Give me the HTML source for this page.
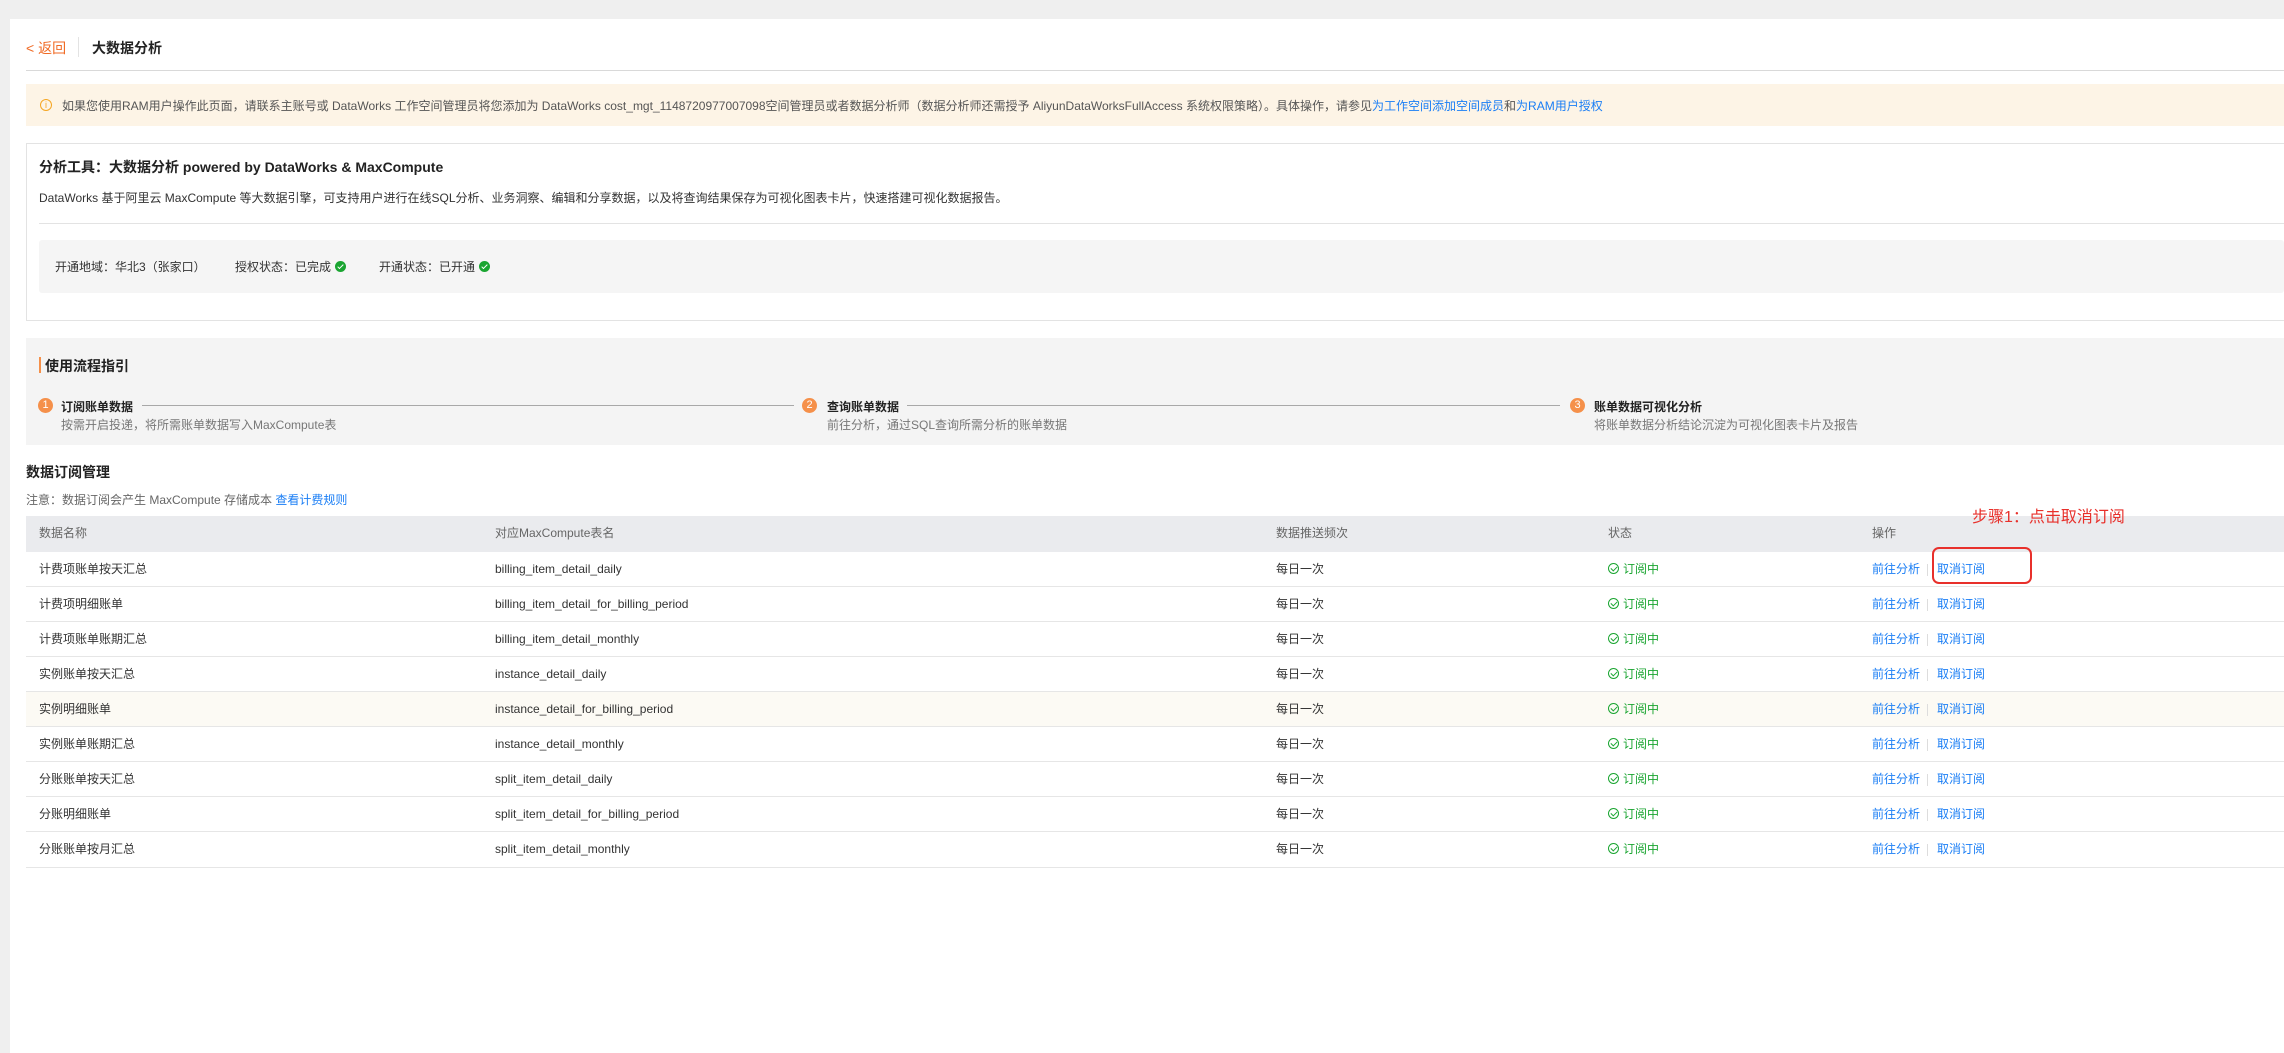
<!DOCTYPE html>
<html><head><meta charset="utf-8"><style>
*{margin:0;padding:0;box-sizing:border-box}
body{width:2284px;height:1053px;background:#efefef;font-family:"Liberation Sans","Noto Sans CJK SC",sans-serif;font-size:12px;color:#333;position:relative;overflow:hidden}
.a{position:absolute;white-space:nowrap}
#panel{position:absolute;left:10px;top:19px;right:0;bottom:0;background:#fff}
.blue{color:#1a7ef5}
.row{position:absolute;left:26px;right:0;height:35px;border-bottom:1px solid #e6e6e6}
.row span{position:absolute;top:0;line-height:35px;white-space:nowrap}
.ok{color:#1aa531}
.ck{display:inline-block;width:11px;height:11px;border:1px solid #1aa531;border-radius:50%;vertical-align:-1px;margin-right:4px;position:relative}
.ck:after{content:"";position:absolute;left:3px;top:1px;width:3px;height:5px;border:solid #1aa531;border-width:0 1px 1px 0;transform:rotate(45deg)}
.gc{display:inline-block;width:11px;height:11px;background:#1aa531;border-radius:50%;vertical-align:-1px;margin-left:4px;position:relative}
.gc:after{content:"";position:absolute;left:4px;top:2px;width:2px;height:5px;border:solid #fff;border-width:0 1.5px 1.5px 0;transform:rotate(45deg)}
.num{position:absolute;width:15px;height:15px;border-radius:50%;background:#f5904a;color:#fff;font-size:11px;text-align:center;line-height:15px}
</style></head><body>
<div id="panel"></div>
<div class="a" style="left:26px;top:38px;font-size:14px;color:#f06a24">&lt; 返回</div>
<div class="a" style="left:78px;top:37px;width:1px;height:20px;background:#e3e3e3"></div>
<div class="a" style="left:92px;top:38px;font-size:14px;font-weight:bold;color:#222">大数据分析</div>
<div class="a" style="left:26px;top:70px;right:0;height:1px;background:#d9d9d9"></div>

<div class="a" style="left:26px;top:84px;right:0;height:42px;background:#fdf4e6"></div>
<div class="a" style="left:40px;top:99px;width:12px;height:12px;border:1px solid #f5a623;border-radius:50%;color:#f5a623;font-size:9px;text-align:center;line-height:10px">i</div>
<div class="a" style="left:62px;top:97px;color:#555">如果您使用RAM用户操作此页面，请联系主账号或 DataWorks 工作空间管理员将您添加为 DataWorks cost_mgt_1148720977007098空间管理员或者数据分析师（数据分析师还需授予 AliyunDataWorksFullAccess 系统权限策略）。具体操作，请参见<span class="blue">为工作空间添加空间成员</span>和<span class="blue">为RAM用户授权</span></div>

<div class="a" style="left:26px;top:143px;right:-2px;height:178px;border:1px solid #e3e3e3"></div>
<div class="a" style="left:39px;top:157px;font-size:14px;font-weight:bold;color:#222">分析工具：大数据分析 powered by DataWorks &amp; MaxCompute</div>
<div class="a" style="left:39px;top:189px;color:#333">DataWorks 基于阿里云 MaxCompute 等大数据引擎，可支持用户进行在线SQL分析、业务洞察、编辑和分享数据，以及将查询结果保存为可视化图表卡片，快速搭建可视化数据报告。</div>
<div class="a" style="left:39px;top:223px;right:0;height:1px;background:#e3e3e3"></div>
<div class="a" style="left:39px;top:240px;right:0;height:53px;background:#f5f5f5;border-radius:3px"></div>
<div class="a" style="left:55px;top:258px">开通地域：华北3（张家口）</div>
<div class="a" style="left:235px;top:258px">授权状态：已完成<span class="gc"></span></div>
<div class="a" style="left:379px;top:258px">开通状态：已开通<span class="gc"></span></div>

<div class="a" style="left:26px;top:338px;right:0;height:107px;background:#f4f4f4"></div>
<div class="a" style="left:39px;top:357px;width:2px;height:16px;background:#f5904a"></div>
<div class="a" style="left:45px;top:356px;font-size:14px;font-weight:bold;color:#222">使用流程指引</div>
<div class="num" style="left:38px;top:398px">1</div>
<div class="a" style="left:61px;top:398px;font-weight:bold;color:#222">订阅账单数据</div>
<div class="a" style="left:142px;top:405px;width:652px;height:1px;background:#a8a8a8"></div>
<div class="a" style="left:61px;top:416px;color:#777">按需开启投递，将所需账单数据写入MaxCompute表</div>
<div class="num" style="left:802px;top:398px">2</div>
<div class="a" style="left:827px;top:398px;font-weight:bold;color:#222">查询账单数据</div>
<div class="a" style="left:907px;top:405px;width:653px;height:1px;background:#a8a8a8"></div>
<div class="a" style="left:827px;top:416px;color:#777">前往分析，通过SQL查询所需分析的账单数据</div>
<div class="num" style="left:1570px;top:398px">3</div>
<div class="a" style="left:1594px;top:398px;font-weight:bold;color:#222">账单数据可视化分析</div>
<div class="a" style="left:1594px;top:416px;color:#777">将账单数据分析结论沉淀为可视化图表卡片及报告</div>

<div class="a" style="left:26px;top:462px;font-size:14px;font-weight:bold;color:#222">数据订阅管理</div>
<div class="a" style="left:26px;top:491px;color:#666">注意：数据订阅会产生 MaxCompute 存储成本 <span class="blue">查看计费规则</span></div>

<div class="row" style="top:516px;height:36px;background:#eaebee;border:none;color:#666">
<span style="left:13px">数据名称</span><span style="left:469px">对应MaxCompute表名</span><span style="left:1250px">数据推送频次</span><span style="left:1582px">状态</span><span style="left:1846px">操作</span></div>

<div class="row" style="top:552px"><span style="left:13px">计费项账单按天汇总</span><span style="left:469px">billing_item_detail_daily</span><span style="left:1250px">每日一次</span><span class="ok" style="left:1582px"><i class="ck"></i>订阅中</span><span class="blue" style="left:1846px">前往分析</span><span style="left:1901px;top:12px;width:1px;height:12px;background:#ddd"></span><span class="blue" style="left:1911px">取消订阅</span></div>
<div class="row" style="top:587px"><span style="left:13px">计费项明细账单</span><span style="left:469px">billing_item_detail_for_billing_period</span><span style="left:1250px">每日一次</span><span class="ok" style="left:1582px"><i class="ck"></i>订阅中</span><span class="blue" style="left:1846px">前往分析</span><span style="left:1901px;top:12px;width:1px;height:12px;background:#ddd"></span><span class="blue" style="left:1911px">取消订阅</span></div>
<div class="row" style="top:622px"><span style="left:13px">计费项账单账期汇总</span><span style="left:469px">billing_item_detail_monthly</span><span style="left:1250px">每日一次</span><span class="ok" style="left:1582px"><i class="ck"></i>订阅中</span><span class="blue" style="left:1846px">前往分析</span><span style="left:1901px;top:12px;width:1px;height:12px;background:#ddd"></span><span class="blue" style="left:1911px">取消订阅</span></div>
<div class="row" style="top:657px"><span style="left:13px">实例账单按天汇总</span><span style="left:469px">instance_detail_daily</span><span style="left:1250px">每日一次</span><span class="ok" style="left:1582px"><i class="ck"></i>订阅中</span><span class="blue" style="left:1846px">前往分析</span><span style="left:1901px;top:12px;width:1px;height:12px;background:#ddd"></span><span class="blue" style="left:1911px">取消订阅</span></div>
<div class="row" style="top:692px;background:#fcfaf4"><span style="left:13px">实例明细账单</span><span style="left:469px">instance_detail_for_billing_period</span><span style="left:1250px">每日一次</span><span class="ok" style="left:1582px"><i class="ck"></i>订阅中</span><span class="blue" style="left:1846px">前往分析</span><span style="left:1901px;top:12px;width:1px;height:12px;background:#ddd"></span><span class="blue" style="left:1911px">取消订阅</span></div>
<div class="row" style="top:727px"><span style="left:13px">实例账单账期汇总</span><span style="left:469px">instance_detail_monthly</span><span style="left:1250px">每日一次</span><span class="ok" style="left:1582px"><i class="ck"></i>订阅中</span><span class="blue" style="left:1846px">前往分析</span><span style="left:1901px;top:12px;width:1px;height:12px;background:#ddd"></span><span class="blue" style="left:1911px">取消订阅</span></div>
<div class="row" style="top:762px"><span style="left:13px">分账账单按天汇总</span><span style="left:469px">split_item_detail_daily</span><span style="left:1250px">每日一次</span><span class="ok" style="left:1582px"><i class="ck"></i>订阅中</span><span class="blue" style="left:1846px">前往分析</span><span style="left:1901px;top:12px;width:1px;height:12px;background:#ddd"></span><span class="blue" style="left:1911px">取消订阅</span></div>
<div class="row" style="top:797px"><span style="left:13px">分账明细账单</span><span style="left:469px">split_item_detail_for_billing_period</span><span style="left:1250px">每日一次</span><span class="ok" style="left:1582px"><i class="ck"></i>订阅中</span><span class="blue" style="left:1846px">前往分析</span><span style="left:1901px;top:12px;width:1px;height:12px;background:#ddd"></span><span class="blue" style="left:1911px">取消订阅</span></div>
<div class="row" style="top:832px;height:36px"><span style="left:13px">分账账单按月汇总</span><span style="left:469px">split_item_detail_monthly</span><span style="left:1250px">每日一次</span><span class="ok" style="left:1582px"><i class="ck"></i>订阅中</span><span class="blue" style="left:1846px">前往分析</span><span style="left:1901px;top:12px;width:1px;height:12px;background:#ddd"></span><span class="blue" style="left:1911px">取消订阅</span></div>

<div class="a" style="left:1932px;top:547px;width:100px;height:37px;border:2.5px solid #e8302b;border-radius:7px"></div>
<div class="a" style="left:1972px;top:503px;font-size:16px;color:#e8302b">步骤1：点击取消订阅</div>
</body></html>
